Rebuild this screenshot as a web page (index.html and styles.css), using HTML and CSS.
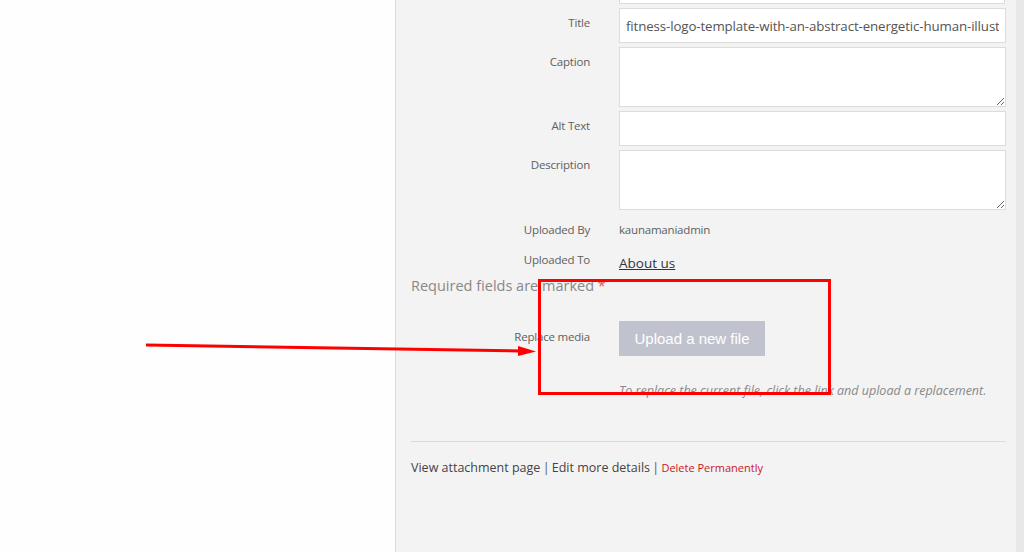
FILE: index.html
```html
<html>

<head>
    <link rel="stylesheet" href="styles.css">
</head>

<body>
    <div class="page">
        <div class="preview"></div>
        <div class="details">
            <div class="setting stub">
                <span class="label"></span>
                <div class="field__stub"></div>
            </div>
            <div class="setting">
                <span class="label">Title</span>
                <input class="field" type="text" value="fitness-logo-template-with-an-abstract-energetic-human-illustration">
            </div>
            <div class="setting">
                <span class="label">Caption</span>
                <textarea class="field area"></textarea>
            </div>
            <div class="setting">
                <span class="label">Alt Text</span>
                <input class="field alt" type="text">
            </div>
            <div class="setting">
                <span class="label">Description</span>
                <textarea class="field area desc"></textarea>
            </div>
            <div class="setting info">
                <span class="label">Uploaded By</span>
                <span class="value">kaunamaniadmin</span>
            </div>
            <div class="setting info to">
                <span class="label">Uploaded To</span>
                <a class="value link" href="#">About us</a>
            </div>
            <p class="required">Required fields are marked <span class="star">*</span></p>
            <div class="setting replace">
                <span class="label">Replace media</span>
                <button class="upload">Upload a new file</button>
            </div>
            <p class="hint">To replace the current file, click the link and upload a replacement.</p>
            <hr class="divider">
            <div class="actions">
                <a href="#">View attachment page</a> | <a href="#">Edit more details</a> | <a class="delete" href="#">Delete Permanently</a>
            </div>
        </div>
        <div class="edge"></div>

        <div class="mark"></div>
        <svg class="arrow" width="400" height="20" viewBox="0 0 400 20">
            <line x1="0" y1="5" x2="375" y2="11" stroke="#ff0000" stroke-width="3" />
            <polygon points="372,6 390,11.5 372,16" fill="#ff0000" />
        </svg>
    </div>
</body>

</html>
```

FILE: styles.css
```css
html, body {
    margin: 0;
    padding: 0;
    width: 1024px;
    height: 552px;
    overflow: hidden;
    font-family: "Open Sans", Arial, sans-serif;
}

.page {
    position: relative;
    display: flex;
    height: 552px;
}

.preview {
    width: 395px;
    background-color: #fefefe;
    border-right: 1px solid #dcdcdc;
}

.details {
    width: 605px;
    padding-left: 15px;
    background-color: #f3f3f3;
}

.edge {
    width: 8px;
    background-color: #e8e8e8;
}

.setting {
    display: flex;
    align-items: flex-start;
    margin-bottom: 4px;
}

.label {
    width: 179px;
    margin-right: 29px;
    padding-top: 7px;
    text-align: right;
    font-size: 11.5px;
    color: #606060;
    letter-spacing: -0.2px;
}

.field__stub {
    width: 384px;
    height: 3px;
    background-color: #fff;
    border: 1px solid #dcdcdc;
    border-top: none;
}

.setting.stub {
    margin-bottom: 4px;
}

.setting.stub .label {
    padding-top: 0;
}

.field {
    box-sizing: border-box;
    width: 387px;
    height: 35px;
    margin: 0;
    padding: 0 6px;
    border: 1px solid #dcdcdc;
    background-color: #fff;
    font-family: "Open Sans", Arial, sans-serif;
    font-size: 13.3px;
    letter-spacing: -0.12px;
    color: #555;
    outline: none;
}

.field.area {
    height: 60px;
    resize: vertical;
}

.setting.info {
    margin: 12px 0 0 0;
    align-items: baseline;
}

.setting.info .label {
    padding-top: 0;
}

.value {
    font-size: 11.5px;
    color: #606060;
    letter-spacing: -0.2px;
}

.setting.to {
    margin-top: 13px;
}

.link {
    font-size: 13.5px;
    color: #333;
    text-decoration: underline;
    letter-spacing: 0;
    position: relative;
    top: 4px;
}

.required {
    margin: 8px 0 0 0;
    font-size: 14.5px;
    color: #888;
}

.star {
    color: #e35555;
}

.setting.replace {
    margin-top: 26px;
}

.setting.replace .label {
    padding-top: 8px;
}

.upload {
    width: 146px;
    height: 35px;
    border: none;
    background-color: #c0c2cd;
    color: #fff;
    font-family: "Liberation Sans", Arial, sans-serif;
    font-size: 15px;
    padding: 0;
}

.hint {
    margin: 26px 0 0 208px;
    font-size: 12.5px;
    font-style: italic;
    color: #888;
}

.divider {
    margin: 42px 0 0 0;
    width: 595px;
    border: none;
    border-top: 1px solid #dcdcdc;
}

.actions {
    margin-top: 17px;
    font-size: 12.5px;
    color: #555;
    word-spacing: -1px;
}

.actions a {
    color: #444;
    text-decoration: none;
    word-spacing: 0;
}

.actions a.delete {
    color: #c8161d;
    font-size: 11px;
}

.mark {
    position: absolute;
    left: 538px;
    top: 279px;
    width: 287px;
    height: 110px;
    border: 3px solid #ff0000;
}

.arrow {
    position: absolute;
    left: 146px;
    top: 340px;
}
```
